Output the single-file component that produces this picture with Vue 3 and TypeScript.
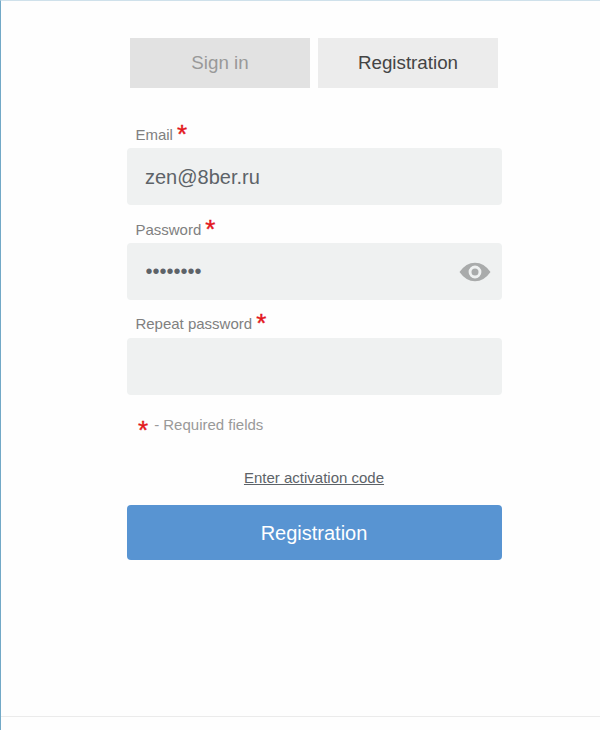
<script setup lang="ts">
import { ref } from 'vue'

interface Field {
  id: string
  label: string
  value: string
  masked: boolean
  toggle: boolean
}

const fields = ref<Field[]>([
  { id: 'email', label: 'Email', value: 'zen@8ber.ru', masked: false, toggle: false },
  { id: 'password', label: 'Password', value: '••••••••', masked: true, toggle: true },
  { id: 'repeat', label: 'Repeat password', value: '', masked: true, toggle: false },
])
</script>

<template>
  <main class="page">
    <div class="content">
      <nav class="tabs">
        <button type="button" class="tab muted">Sign in</button>
        <button type="button" class="tab">Registration</button>
      </nav>
      <form class="form" @submit.prevent>
        <div v-for="field in fields" :key="field.id" class="field">
          <label class="label" :class="field.id" :for="field.id">
            <span>{{ field.label }}</span><span class="star">*</span>
          </label>
          <div class="box">
            <input :id="field.id" v-model="field.value" class="input" :class="{ masked: field.masked }" type="text" />
            <svg v-if="field.toggle" class="eye" viewBox="0 0 32 20">
              <path fill="#a9abab" fill-rule="evenodd" d="M.5 10Q7 .7 16 .7T31.500 10Q25 19.300 16 19.300T.5 10ZM16 3.600a6.400 6.400 0 1 0 0 12.800a6.400 6.400 0 1 0 0-12.800Z" />
              <circle cx="16" cy="10" r="3.500" fill="#a9abab" />
            </svg>
          </div>
        </div>
        <p class="note"><span class="star">*</span><span>- Required fields</span></p>
        <a class="code" href="#">Enter activation code</a>
        <button class="submit" type="submit">Registration</button>
      </form>
    </div>
    <footer class="footer"></footer>
  </main>
</template>

<style>
body {
  background: #fefefe;
}
</style>

<style scoped>
.page {
  box-sizing: border-box;
  display: flex;
  flex-direction: column;
  height: 730px;
  border-top: 1px solid #cfe1eb;
  border-left: 1px solid #72a9c7;
  font-family: "Liberation Sans", Arial, sans-serif;
  overflow: hidden;
}
.content {
  flex: 1;
  padding: 37px 98px 0 126px;
}
.tabs {
  display: flex;
  gap: 8px;
  padding-left: 3px;
}
.tab {
  width: 180px;
  height: 50px;
  padding: 0 0 1px;
  border: 0;
  background: #ececec;
  color: #444;
  font: 18.75px "Liberation Sans", Arial, sans-serif;
}
.muted {
  background: #e2e2e2;
  color: #999;
}
.form {
  display: flex;
  flex-direction: column;
  padding-top: 34px;
}
.field {
  height: 95px;
}
.label {
  display: flex;
  gap: 4px;
  height: 26px;
  padding-left: 8.4px;
  color: #808080;
  font-size: 15px;
  line-height: 26px;
}
.repeat {
  line-height: 24px;
}
.star {
  color: #e3161b;
  font-size: 26px;
  -webkit-text-stroke: 0.4px #e3161b;
}
.label .star {
  margin-top: -1px;
}
.box {
  box-sizing: border-box;
  display: flex;
  align-items: center;
  width: 375px;
  height: 57px;
  padding: 0 11.500px 0 18px;
  border-radius: 4px;
  background: #eff1f1;
}
.input {
  flex: 1;
  min-width: 0;
  height: 30px;
  padding: 2px 0 0;
  border: 0;
  outline: 0;
  background: transparent;
  color: #5d6368;
  font: 20px "Liberation Sans", Arial, sans-serif;
}
.input.masked {
  padding: 0 0 1px 0.5px;
}
.eye {
  width: 32px;
  height: 20px;
  margin-top: 1px;
}
.note {
  display: flex;
  gap: 6px;
  height: 30px;
  margin: 3px 0 0;
  padding-left: 11px;
  color: #999;
  font-size: 15px;
  line-height: 30px;
}
.note .star {
  margin-top: 5px;
}
.code {
  align-self: center;
  height: 20px;
  margin-top: 28px;
  margin-right: 1px;
  color: #5d6368;
  font-size: 15px;
  line-height: 20px;
}
.submit {
  width: 375px;
  height: 55px;
  margin-top: 17px;
  padding: 1px 1px 0 0;
  border: 0;
  border-radius: 4px;
  background: #5894d2;
  color: #fff;
  font: 20px "Liberation Sans", Arial, sans-serif;
}
.footer {
  height: 13px;
  border-top: 1px solid #ebebeb;
}
</style>
